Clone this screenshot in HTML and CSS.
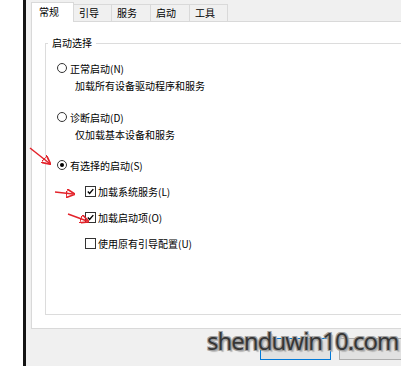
FILE: index.html
```html
<!DOCTYPE html>
<html lang="zh-CN">
<head>
    <meta charset="UTF-8">
    <meta name="viewport" content="width=device-width, initial-scale=1.0">
    <title>系统配置</title>
    <link rel="stylesheet" href="styles.css">
</head>
<body>
    <div class="screen">
        <div class="gap"></div>
        <div class="edge"></div>

        <!-- Dialog -->
        <div class="dialog">
            <div class="tabs">
                <div class="tab active">常规</div>
                <div class="tab">引导</div>
                <div class="tab">服务</div>
                <div class="tab">启动</div>
                <div class="tab">工具</div>
                <div class="tab-fill"></div>
            </div>

            <div class="panel">
                <div class="group">
                    <span class="legend">启动选择</span>

                    <div class="option">
                        <div class="choice"><span class="radio"></span>正常启动(N)</div>
                        <div class="note">加载所有设备驱动程序和服务</div>
                    </div>

                    <div class="option">
                        <div class="choice"><span class="radio"></span>诊断启动(D)</div>
                        <div class="note">仅加载基本设备和服务</div>
                    </div>

                    <div class="option">
                        <div class="choice"><span class="radio checked"></span>有选择的启动(S)</div>
                        <div class="subs">
                            <div class="check-row">
                                <span class="box"><svg viewBox="0 0 11 11"><path d="M2.2 5.6 L4.4 7.9 L8.9 2.6"/></svg></span>加载系统服务(L)
                            </div>
                            <div class="check-row">
                                <span class="box"><svg viewBox="0 0 11 11"><path d="M2.2 5.6 L4.4 7.9 L8.9 2.6"/></svg></span>加载启动项(O)
                            </div>
                            <div class="check-row">
                                <span class="box"></span>使用原有引导配置(U)
                            </div>
                        </div>
                    </div>
                </div>
            </div>

            <!-- buttons sit under the watermark, their labels are not visible -->
            <div class="buttons">
                <button class="btn btn-default" aria-label="确定"></button>
                <button class="btn" aria-label="取消"></button>
            </div>
        </div>
    </div>

    <!-- Red annotation arrows -->
    <svg class="arrows" viewBox="0 0 401 366">
        <defs>
            <marker id="head" viewBox="0 0 8 8" refX="6" refY="4" markerWidth="6" markerHeight="6" orient="auto">
                <path d="M0 0 L8 4 L0 8 Z" fill="#e3232b"/>
            </marker>
        </defs>
        <path d="M30 148 L49 163" marker-end="url(#head)"/>
        <path d="M55 192 L73 194" marker-end="url(#head)"/>
        <path d="M68 214 L87 221" marker-end="url(#head)"/>
    </svg>

    <div class="watermark">shenduwin10.com</div>
</body>
</html>
```

FILE: styles.css
```css
* {
    box-sizing: border-box;
    margin: 0;
    padding: 0;
}

body {
    background: white;
    overflow: hidden;
    font-family: "Noto Sans CJK SC", "Noto Sans", sans-serif;
    font-size: 10px;
    color: #000;
}

.screen {
    display: flex;
    width: 401px;
    height: 366px;
    overflow: hidden;
}

.gap {
    width: 23px;
    background: white;
}

.edge {
    width: 3px;
    background: #141414;
}

.dialog {
    flex: 1;
    min-width: 0;
    overflow: hidden;
    background: #f0f0f0;
    padding: 2px 0 0 5px;
}

/* Tabs */
.tabs {
    display: flex;
    align-items: flex-end;
    height: 19px;
}

.tab {
    height: 17px;
    width: 38px;
    padding-left: 5px;
    line-height: 16px;
    background: #f0f0f0;
    border-top: 1px solid #d9d9d9;
    border-right: 1px solid #d9d9d9;
}

.tab:nth-child(3),
.tab:nth-child(4) {
    width: 39px;
}

.tab.active {
    position: relative;
    z-index: 1;
    width: 43px;
    height: 20px;
    margin-bottom: -1px;
    padding: 1px 0 0 7px;
    background: white;
    border-left: 1px solid #d9d9d9;
}

.tab-fill {
    flex: 1;
}

/* Panel */
.panel {
    height: 308px;
    background: white;
    border: 1px solid #d9d9d9;
    border-right: none;
    padding: 21px 0 0 13px;
}

.group {
    position: relative;
    height: 272px;
    border: 1px solid #dcdcdc;
    border-right: none;
    padding: 15px 0 0 11px;
}

.legend {
    position: absolute;
    top: -8px;
    left: 2px;
    padding: 0 4px;
    line-height: 14px;
    background: white;
}

.option {
    margin-bottom: 13px;
}

.option:nth-of-type(2) {
    margin-bottom: 12px;
}

.choice,
.check-row {
    display: flex;
    align-items: center;
    height: 18px;
    gap: 3px;
}

.note {
    height: 18px;
    line-height: 18px;
    padding-left: 18px;
}

.radio {
    display: grid;
    place-items: center;
    width: 10px;
    height: 10px;
    border: 1px solid #333;
    border-radius: 50%;
    background: white;
}

.radio.checked::after {
    content: '';
    width: 4px;
    height: 4px;
    border-radius: 50%;
    background: #000;
}

.subs {
    padding-left: 28px;
}

.check-row {
    margin-top: 8px;
    gap: 2px;
}

.box {
    display: block;
    width: 11px;
    height: 11px;
    border: 1px solid #333;
    background: white;
}

.box svg {
    display: block;
    width: 9px;
    height: 9px;
    fill: none;
    stroke: #000;
    stroke-width: 1.7;
}

/* Buttons */
.buttons {
    display: flex;
    gap: 8px;
    margin: 9px 0 0 229px;
}

.btn {
    flex: none;
    width: 71px;
    height: 22px;
    border: 1px solid #adadad;
    background: #e1e1e1;
}

.btn-default {
    border-color: #0078d7;
}

/* Overlays */
.arrows {
    position: absolute;
    left: 0;
    top: 0;
    width: 401px;
    height: 366px;
    pointer-events: none;
}

.arrows path {
    fill: none;
    stroke: #e3232b;
    stroke-width: 1.5;
}

.watermark {
    position: absolute;
    left: 207px;
    top: 329px;
    font-family: "Noto Sans", sans-serif;
    font-size: 24px;
    line-height: 24px;
    letter-spacing: -1px;
    color: #363636;
    text-shadow: 1px 1px 0 #a0a0a0, -1px -1px 0 #a0a0a0, 1px -1px 0 #a0a0a0, -1px 1px 0 #a0a0a0, 2px 2px 1px #b8b8b8;
}
```
